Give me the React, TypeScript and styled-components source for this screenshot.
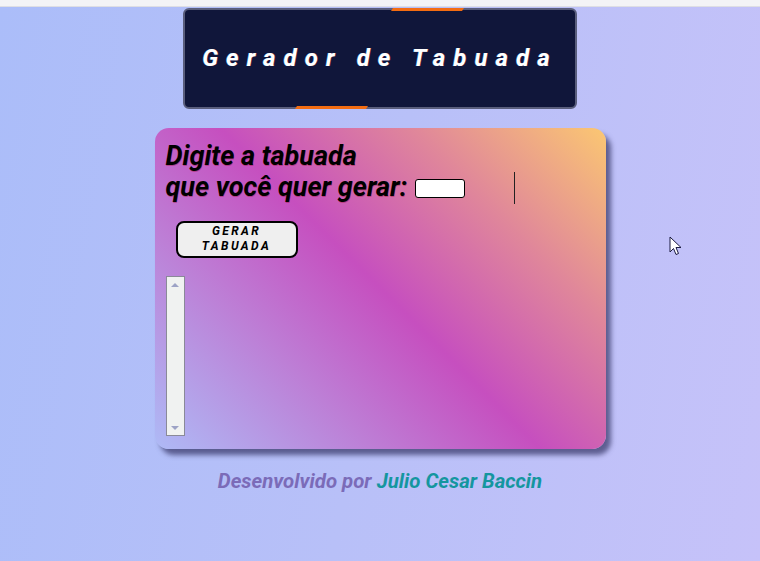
import React from "react";
import styled, { createGlobalStyle } from "styled-components";

const Global = createGlobalStyle`
  html, body { margin: 0; padding: 0; }
  body {
    width: 760px;
    height: 561px;
    overflow: hidden;
    font-family: Roboto, "Liberation Sans", sans-serif;
  }
`;

const Page = styled.div`
  width: 760px;
  height: 561px;
  display: flex;
  flex-direction: column;
  position: relative;
`;

const TopStrip = styled.div`
  height: 6px;
  background: #f3f3f6;
  border-bottom: 1px solid #dedee4;
  flex: none;
`;

const Main = styled.main`
  flex: 1;
  background: linear-gradient(100deg, #abbdf9 0%, #b8c0f8 50%, #c6c2f9 100%);
  display: flex;
  flex-direction: column;
  align-items: center;
  padding-top: 1px;
`;

const Header = styled.header`
  position: relative;
  box-sizing: border-box;
  width: 394px;
  height: 101px;
  background: #10163a;
  border: 2px solid #5a5e7c;
  border-radius: 6px;
  display: flex;
  align-items: center;
  justify-content: center;

  &::before, &::after {
    content: "";
    position: absolute;
    height: 3px;
    width: 73px;
    background: #f36c12;
    clip-path: polygon(2px 0, 100% 0, calc(100% - 2px) 100%, 0 100%);
  }
  &::before { top: -2px; left: 206px; }
  &::after { bottom: -2px; left: 110px; }
`;

const Title = styled.h1`
  margin: 0 0 2px 0;
  color: #ffffff;
  font-size: 24px;
  font-weight: 700;
  font-style: italic;
  letter-spacing: 8.1px;
  text-shadow: -0.5px 0 0 rgba(80, 200, 255, 0.6), 0.5px 0 0 rgba(255, 80, 80, 0.5);
`;

const Card = styled.section`
  margin-top: 19px;
  box-sizing: border-box;
  width: 451px;
  height: 321px;
  border-radius: 14px;
  background: linear-gradient(225deg, #fbc772 0%, #e0879a 25%, #c64fbf 50%, #bd7fd6 72%, #aebaf6 100%);
  box-shadow: 5px 6px 5px rgba(60, 60, 110, 0.75);
  padding: 13px 11px;
  display: flex;
  flex-direction: column;
`;

const Prompt = styled.label`
  display: flex;
  align-items: flex-end;
  font-size: 27px;
  font-weight: 700;
  font-style: italic;
  line-height: 31px;
  color: #000;
  text-shadow: 0.5px 0.5px 0 rgba(150, 0, 30, 0.35);
`;

const PromptText = styled.span``;

const NumberInput = styled.span`
  display: inline-block;
  box-sizing: border-box;
  width: 50px;
  height: 19px;
  margin: 0 0 5px 8px;
  background: #fff;
  border: 1.5px solid #000;
  border-radius: 3px;
`;

const Caret = styled.span`
  display: inline-block;
  width: 1px;
  height: 32px;
  background: #222;
  margin: 0 0 -1px 49px;
`;

const Button = styled.button`
  margin: 18px 0 0 10px;
  box-sizing: border-box;
  width: 122px;
  height: 37px;
  background: #efefef;
  border: 2px solid #000;
  border-radius: 8px;
  font-family: Roboto, "Liberation Sans", sans-serif;
  font-size: 12px;
  font-weight: 700;
  font-style: italic;
  letter-spacing: 2.4px;
  line-height: 15px;
  color: #000;
  padding: 0;
`;

const ListBox = styled.div`
  margin-top: 18px;
  box-sizing: border-box;
  width: 19px;
  height: 162px;
  background: #f0f2f1;
  border: 1px solid #8a8a98;
  display: flex;
  flex-direction: column;
  justify-content: space-between;
  align-items: center;
  padding: 6px 0 5px;
`;

const Arrow = styled.span<{ $down?: boolean }>`
  width: 0;
  height: 0;
  border-left: 4px solid transparent;
  border-right: 4px solid transparent;
  ${(p) =>
    p.$down
      ? "border-top: 4px solid #9da3c6;"
      : "border-bottom: 4px solid #9da3c6;"}
`;

const Footer = styled.p`
  margin: 20px 0 0;
  font-size: 20.4px;
  font-weight: 700;
  font-style: italic;
  color: #7b6bb8;
`;

const Author = styled.span`
  color: #14969f;
`;

const Pointer = styled.svg`
  position: absolute;
  left: 669px;
  top: 236px;
`;

export default function App() {
  return (
    <>
      <Global />
      <Page>
        <TopStrip />
        <Main>
          <Header>
            <Title>Gerador de Tabuada</Title>
          </Header>
          <Card>
            <Prompt>
              <PromptText>
                Digite a tabuada
                <br />
                que você quer gerar:
              </PromptText>
              <NumberInput />
              <Caret />
            </Prompt>
            <Button>
              GERAR
              <br />
              TABUADA
            </Button>
            <ListBox>
              <Arrow />
              <Arrow $down />
            </ListBox>
          </Card>
          <Footer>
            Desenvolvido por <Author>Julio Cesar Baccin</Author>
          </Footer>
        </Main>
        <Pointer width="14" height="21" viewBox="0 0 14 21">
          <path
            d="M1 1 L1 16 L4.5 12.5 L7 18.5 L9.5 17.5 L7 11.5 L12 11.5 Z"
            fill="#fff"
            stroke="#1a1a40"
            strokeWidth="1"
            strokeLinejoin="round"
          />
        </Pointer>
      </Page>
    </>
  );
}
